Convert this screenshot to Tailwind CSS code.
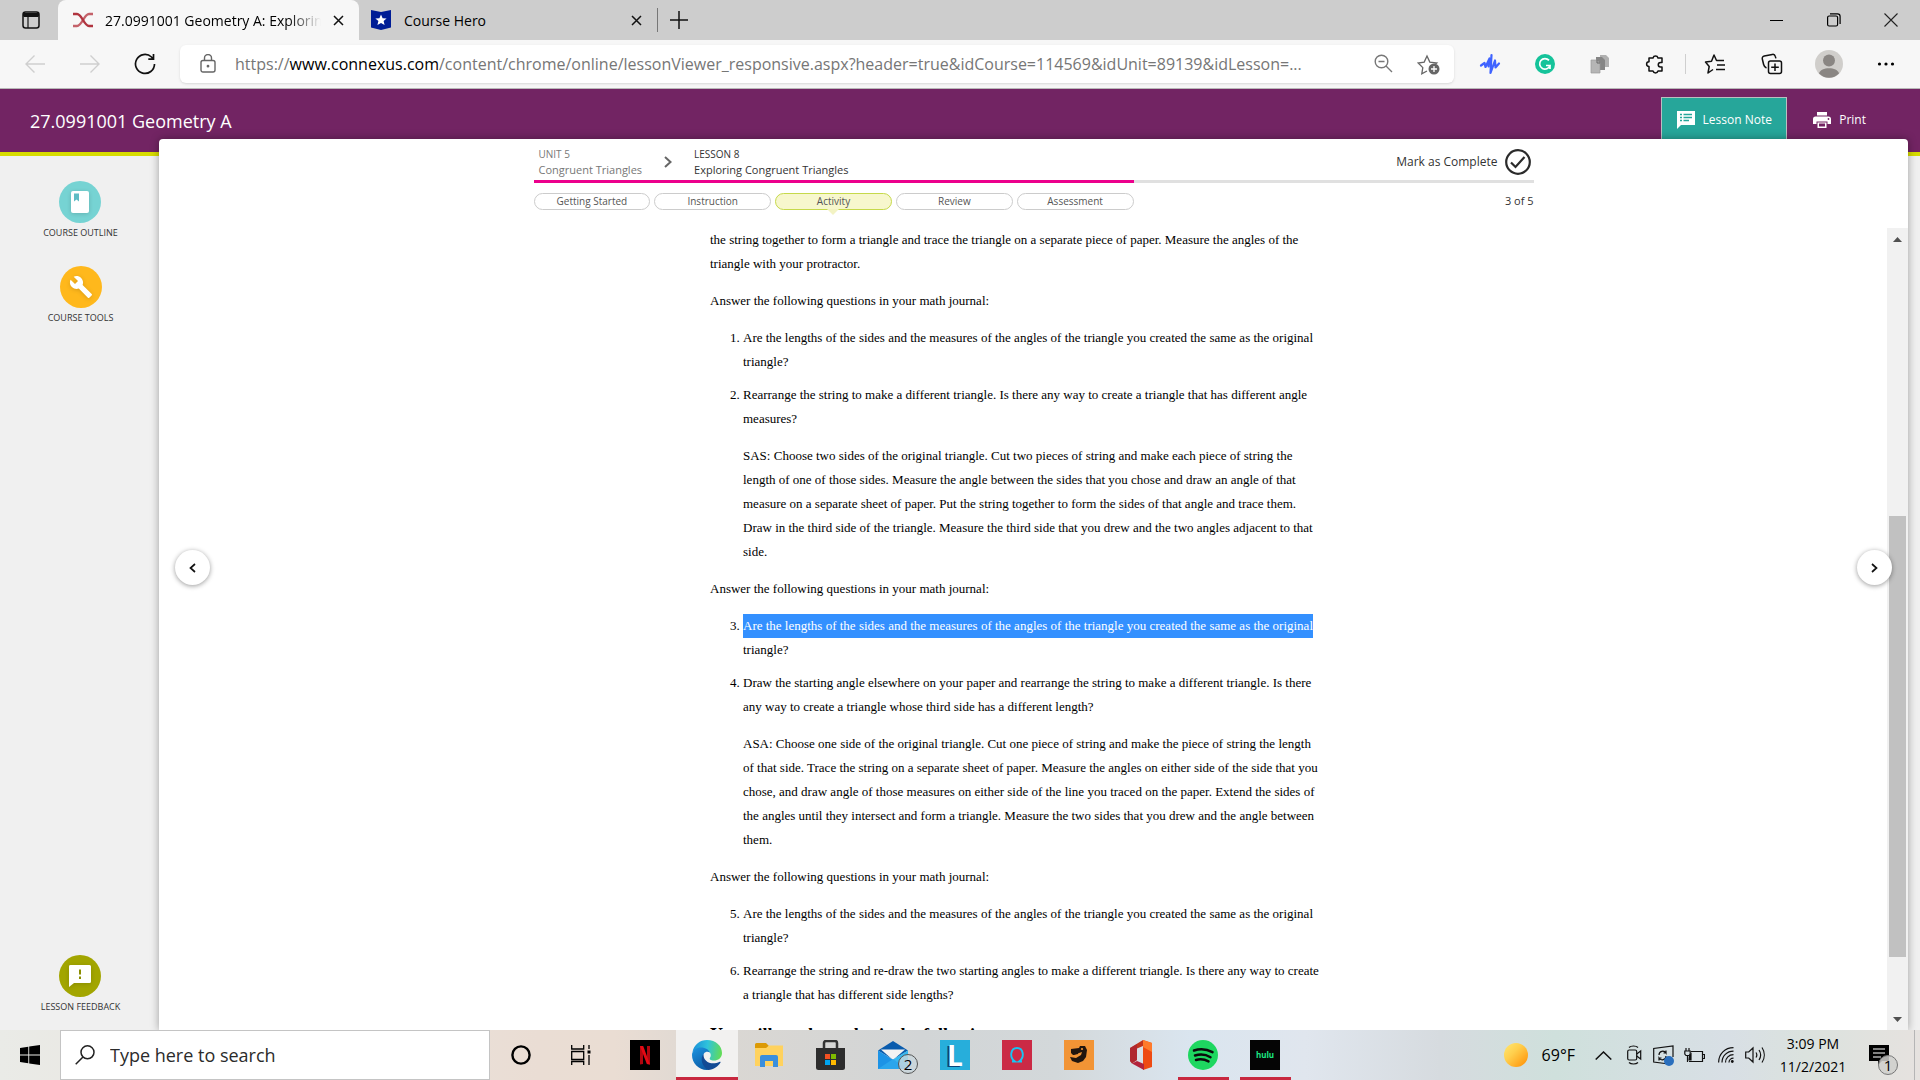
<!DOCTYPE html>
<html lang="en">
<head>
    <meta charset="UTF-8">
    <meta name="viewport" content="width=device-width, initial-scale=1.0">
    <title>27.0991001 Geometry A: Exploring Congruent Triangles</title>
    <script src="https://cdn.jsdelivr.net/npm/@tailwindcss/browser@4"></script>
</head>
<body class="flex flex-col h-screen overflow-hidden bg-[#f0f0f0] text-black font-['Open_Sans','Noto_Sans',sans-serif]">

    <!-- Tab strip -->
    <div class="flex h-10 shrink-0 items-center bg-[#cdcdcd]">
        <button aria-label="Tab actions" class="flex w-[58px] justify-center pl-1">
            <svg class="size-5" viewBox="0 0 20 20" fill="none" stroke="#111" stroke-width="1.5"><rect x="2" y="2" width="16" height="16" rx="2.5"/><path d="M2 4.5h16M2.5 5.5h15" stroke-width="3"/><path d="M7 6v12" stroke-width="1.2"/></svg>
        </button>
        <div class="flex h-full w-[301px] items-center rounded-t-lg bg-[#f7f7f7] pl-[15px] pr-3">
            <svg class="h-4 w-5 shrink-0" viewBox="0 0 20 16" fill="none" stroke-width="2.4"><path d="M20 2h-4c-5 0-7 12-12 12H0" stroke="#c4626a"/><path d="M0 2h4c5 0 7 12 12 12h4" stroke="#b0343f"/></svg>
            <span class="ml-3 w-[216px] overflow-hidden whitespace-nowrap text-[14px] mask-r-from-85%">27.0991001 Geometry A: Explorin</span>
            <button aria-label="Close tab" class="ml-3"><svg class="size-[11px]" viewBox="0 0 11 11" stroke="#111" stroke-width="1.5"><path d="M1 1l9 9M10 1l-9 9"/></svg></button>
        </div>
        <div class="flex h-full w-[298px] items-center pl-3 pr-[15px]">
            <svg class="h-5 w-5" viewBox="0 0 20 20"><path d="M0 0l10 2L20 0v17.500L10 20 0 17.500z" fill="#001d96"/><path d="M10 4.500l1.600 3.700 4 .3-3 2.600 1 4L10 13l-3.600 2.100 1-4-3-2.600 4-.3z" fill="#fff"/></svg>
            <span class="ml-[13px] text-[14px]">Course Hero</span>
            <button aria-label="Close tab" class="ml-auto"><svg class="size-[11px]" viewBox="0 0 11 11" stroke="#111" stroke-width="1.500"><path d="M1 1l9 9M10 1l-9 9"/></svg></button>
        </div>
        <div class="h-6 w-px bg-[#777]"></div>
        <button aria-label="New tab" class="ml-3"><svg class="size-[18px]" viewBox="0 0 18 18" stroke="#111" stroke-width="1.500"><path d="M9 0v18M0 9h18"/></svg></button>
        <div class="ml-auto flex w-[150px] items-center justify-between pr-[22px]">
            <button aria-label="Minimize"><svg class="size-[13px]" viewBox="0 0 13 13" stroke="#000"><path d="M0 6.500h13"/></svg></button>
            <button aria-label="Restore"><svg class="size-[14px]" viewBox="0 0 14 14" fill="none" stroke="#000" stroke-width="1.200"><rect x=".6" y="3" width="10" height="10" rx="1.500"/><path d="M3 .8h7.500a2.600 2.600 0 0 1 2.600 2.600V11"/></svg></button>
            <button aria-label="Close window"><svg class="size-[14px]" viewBox="0 0 14 14" stroke="#222" stroke-width="1.100"><path d="M.5.5l13 13M13.500.5l-13 13"/></svg></button>
        </div>
    </div>

    <!-- Address bar -->
    <div class="flex h-[49px] shrink-0 items-center border-b border-[#b8b8b8] bg-[#f7f7f7] pb-px">
        <div class="flex w-[180px] shrink-0 items-center justify-between pl-6 pr-6">
            <button aria-label="Back"><svg class="size-[22px]" viewBox="0 0 22 22" fill="none" stroke="#cfcfcf" stroke-width="1.400"><path d="M21 11H2M10.500 2.500L2 11l8.500 8.500"/></svg></button>
            <button aria-label="Forward"><svg class="size-[22px]" viewBox="0 0 22 22" fill="none" stroke="#cfcfcf" stroke-width="1.400"><path d="M1 11h19M11.500 2.500L20 11l-8.500 8.500"/></svg></button>
            <button aria-label="Refresh"><svg class="size-[22px]" viewBox="0 0 22 22" fill="none" stroke="#111" stroke-width="1.700"><path d="M20.500 11a9.500 9.500 0 1 1-3-7l1.700 1.800M19.500 1v5.200h-5.200"/></svg></button>
        </div>
        <div class="flex h-[38px] min-w-0 flex-1 items-center rounded-md bg-white pl-5 pr-[14px] shadow-sm">
            <svg class="h-[19px] w-4 shrink-0" viewBox="0 0 16 19" fill="none" stroke="#666" stroke-width="1.400"><rect x="1" y="6.500" width="14" height="11.500" rx="2"/><path d="M4.500 6.500V4a3.500 3.500 0 0 1 7 0v2.500"/><circle cx="8" cy="12.200" r=".7" fill="#666"/></svg>
            <div class="ml-[19px] min-w-0 flex-1 truncate text-[16px] text-[#767676]">https://<span class="text-black">www.connexus.com</span>/content/chrome/online/lessonViewer_responsive.aspx?header=true&amp;idCourse=114569&amp;idUnit=89139&amp;idLesson=...</div>
            <button aria-label="Zoom" class="ml-7"><svg class="size-[19px]" viewBox="0 0 19 19" fill="none" stroke="#777" stroke-width="1.400"><circle cx="7.500" cy="7.500" r="6.300"/><path d="M12 12l6 6M4.500 7.500h6"/></svg></button>
            <button aria-label="Add to favorites" class="ml-6"><svg class="h-[22px] w-[23px]" viewBox="0 0 23 22" fill="none" stroke="#666" stroke-width="1.300"><path d="M10 18l-5.200 2.800 1-6.200L1.200 10l6-.9L10 3l2.800 6.100 7 .9-1.800 1.600"/><circle cx="17" cy="16" r="5.500" fill="#666" stroke="none"/><path d="M17 13v6M14 16h6" stroke="#fff"/></svg></button>
        </div>
        <div class="flex shrink-0 items-center pl-2 pr-1.5">
            <div class="grid w-[220px] grid-cols-4 place-items-center">
                <button aria-label="Speechify"><svg class="size-[22px]" viewBox="0 0 22 22" fill="none" stroke="#3f63ff" stroke-width="2.200" stroke-linecap="round" stroke-linejoin="round"><path d="M2 12.500l3.500-2.500 1 4L10.500 5.500l-1 8M12.500 2l-1 18L16 7.500l.5 7 3.500-4"/></svg></button>
                <button aria-label="Grammarly"><svg class="size-5" viewBox="0 0 20 20"><circle cx="10" cy="10" r="10" fill="#15c39a"/><path d="M14 6.400A5.300 5.300 0 1 0 15 11.500h-4M15 11v4" fill="none" stroke="#fff" stroke-width="1.700"/></svg></button>
                <button aria-label="Copy pages"><svg class="size-5" viewBox="0 0 20 20"><path d="M10 1h6l3 3v9h-9z" fill="#b0b0b0"/><path d="M6 3h6l3 3v10H6z" fill="#858585"/><path d="M1 6h6l3 3v10H1z" fill="#b5b5b5" stroke="#999" stroke-width=".7"/><path d="M7 6v3h3" fill="none" stroke="#666"/></svg></button>
                <button aria-label="Extensions"><svg class="size-5" viewBox="0 0 20 20" fill="none" stroke="#111" stroke-width="1.500" stroke-linejoin="round"><path d="M4 4h4a2.600 2.600 0 0 1 5 0h4v4.500h-1.500a2 2 0 0 0 0 4.500H17v4h-4a2.600 2.600 0 0 1-5 0H4v-4.500a2.400 2.400 0 0 1 0-4.800z"/></svg></button>
            </div>
            <div class="ml-[3px] h-5 w-px bg-[#cfcfcf]"></div>
            <div class="grid w-[228px] grid-cols-4 place-items-center">
                <button aria-label="Favorites"><svg class="size-[22px]" viewBox="0 0 22 22" fill="none" stroke="#111" stroke-width="1.500" stroke-linejoin="round"><path d="M9 16.500L4 20l1.200-6.500L1.500 9l6-.8L10 2l2.500 5.500H20M13 12h8M12 16.500h9"/></svg></button>
                <button aria-label="Collections"><svg class="size-[22px]" viewBox="0 0 22 22" fill="none" stroke="#111" stroke-width="1.500"><rect x="7.500" y="8" width="13" height="12.500" rx="2"/><path d="M14 10.500v7.500M10.200 14.200h7.600M5.500 15C3 14 3 13 2.500 11L1.300 6c-.4-1.500.5-2.600 2-2.900l8-1.700c1.500-.3 2.600.5 3 2l.6 2"/></svg></button>
                <button aria-label="Profile"><svg class="size-7" viewBox="0 0 28 28"><circle cx="14" cy="14" r="14" fill="#d0cecb"/><circle cx="14" cy="10.500" r="6" fill="#8a8683"/><path d="M4 23.500c1.500-7 18.500-7 20 0a14 14 0 0 1-20 0z" fill="#8a8683"/></svg></button>
                <button aria-label="Settings and more"><svg class="h-5 w-[18px]" viewBox="0 0 18 20"><circle cx="2.500" cy="10" r="1.600"/><circle cx="9" cy="10" r="1.600"/><circle cx="15.500" cy="10" r="1.600"/></svg></button>
            </div>
        </div>
    </div>

    <!-- Course header -->
    <header class="flex h-[67px] shrink-0 items-start justify-between border-b-4 border-[#d7dc00] bg-[#722463] pl-[30px] pr-[54px] text-white">
        <h1 class="pt-5 text-[18px] leading-6">27.0991001 Geometry A</h1>
        <div class="flex pt-2 text-[12px]">
            <button class="flex h-[46px] w-[126px] items-center justify-center gap-2 border border-[#b9bfc0] bg-[#26a69a]">
                <svg class="size-[18px]" viewBox="0 0 18 18"><path d="M0 0h18v14H4l-4 4z" fill="#fff"/><path d="M3 3.500h2M3 6.500h2M3 9.500h2M6.500 3.500H15M6.500 6.500H15M6.500 9.500H12" stroke="#26a69a" stroke-width="1.600"/></svg>
                Lesson Note
            </button>
            <button class="ml-[26px] flex h-[46px] items-center gap-2">
                <svg class="size-[18px]" viewBox="0 0 18 18" fill="#fff"><path d="M4 1h10v3.500H4zM2.500 5.500h13A2.500 2.500 0 0 1 18 8v5h-3.500v-2.500h-11V13H0V8a2.500 2.500 0 0 1 2.500-2.500z"/><path d="M4.500 11.500h9V17h-9z"/><path d="M6 12.500h6v3H6z" fill="#722463"/><circle cx="15.500" cy="8" r=".9" fill="#722463"/></svg>
                Print
            </button>
        </div>
    </header>

    <div class="flex min-h-0 flex-1">
        <!-- Sidebar -->
        <nav class="flex w-[159px] shrink-0 flex-col items-center pt-[25px] pb-[15px] pl-0.5 text-[9px] leading-4 text-[#333]">
            <a href="#" class="flex flex-col items-center">
                <span class="flex size-[42px] items-center justify-center rounded-full bg-[#76d3d3]"><svg class="h-[22px] w-[18px] drop-shadow-sm" viewBox="0 0 18 22"><rect width="18" height="22" rx="2" fill="#fff"/><path d="M3 2.500h5v8L5.500 8.500 3 10.500z" fill="#5fbcc4"/></svg></span>
                <span class="mt-0.5">COURSE OUTLINE</span>
            </a>
            <a href="#" class="mt-[25px] flex flex-col items-center">
                <span class="flex size-[42px] items-center justify-center rounded-full bg-[#ffb81c]"><svg class="size-6 drop-shadow-sm" viewBox="0 0 24 24" fill="#fff"><path d="M22.700 19l-9.100-9.100c.9-2.300.4-5-1.500-6.900-2-2-5-2.400-7.400-1.300L9 6 6 9 1.600 4.700C.4 7.100.9 10.100 2.900 12.100c1.900 1.900 4.600 2.400 6.900 1.500l9.100 9.100c.4.4 1 .4 1.400 0l2.300-2.300c.5-.4.5-1.100.1-1.400z"/></svg></span>
                <span class="mt-0.5">COURSE TOOLS</span>
            </a>
            <a href="#" class="mt-auto flex flex-col items-center">
                <span class="flex size-[42px] items-center justify-center rounded-full bg-[#a2a500]"><svg class="size-[22px] drop-shadow-sm" viewBox="0 0 22 22"><path d="M1.500 0h19A1.500 1.500 0 0 1 22 1.500v15a1.500 1.500 0 0 1-1.500 1.500H5l-5 4V1.500A1.500 1.500 0 0 1 1.500 0z" fill="#fff"/><path d="M11 4.500v5M11 11.500v2.500" stroke="#8a8d00" stroke-width="2"/></svg></span>
                <span class="mt-0.5">LESSON FEEDBACK</span>
            </a>
        </nav>

        <!-- Lesson panel -->
        <main class="relative -mt-[17px] mr-3 flex min-w-0 flex-1 flex-col rounded-t bg-white shadow-[0_0_8px_rgba(0,0,0,0.35)]">
            <div class="mx-auto h-[89px] w-[1000px] max-w-full shrink-0 text-[#333]">
                <div class="flex h-[41px] items-center pt-1 pl-[5px]">
                    <a href="#" class="text-[11px] leading-[15px] text-[#777]"><span class="block text-[10px]">UNIT 5</span>Congruent Triangles</a>
                    <svg class="mx-[22px] h-3 w-2" viewBox="0 0 8 12" fill="none" stroke="#666" stroke-width="2"><path d="M1 1l5.500 5L1 11"/></svg>
                    <div class="text-[11px] leading-[15px]"><span class="block text-[10px]">LESSON 8</span>Exploring Congruent Triangles</div>
                    <button class="ml-auto flex items-center gap-[7px] pr-[3px] text-[12px]">Mark as Complete
                        <svg class="size-[26px]" viewBox="0 0 26 26" fill="none" stroke="#2b2b2b" stroke-width="2.200"><circle cx="13" cy="13" r="11.800"/><path d="M6 13.500l4.500 4.500L19.500 8"/></svg>
                    </button>
                </div>
                <div class="h-[3px] w-full bg-[#e0e0e0]"><div class="h-full w-3/5 bg-[#ec008c]"></div></div>
                <div class="flex items-start justify-between pt-[10px]">
                    <div class="grid w-3/5 grid-cols-5 gap-1 text-center text-[10px] leading-[15px] text-[#555]">
                        <button class="rounded-full border border-[#ccc]">Getting Started</button>
                        <button class="rounded-full border border-[#ccc]">Instruction</button>
                        <button class="relative rounded-full border border-[#c6d94a] bg-[#f7f7cd]">Activity<span class="absolute top-full left-1/2 -ml-[6px] border-x-6 border-t-6 border-x-transparent border-t-[#f3f3c4]"></span></button>
                        <button class="rounded-full border border-[#ccc]">Review</button>
                        <button class="rounded-full border border-[#ccc]">Assessment</button>
                    </div>
                    <span class="text-[11px] leading-[15px]">3 of 5</span>
                </div>
            </div>

            <div class="flex min-h-0 flex-1">
                <article class="min-w-0 flex-1 overflow-hidden">
                    <div class="ml-[551px] w-[640px] text-[13px] leading-6 font-['Liberation_Serif',serif]">
                        <p>the string together to form a triangle and trace the triangle on a separate piece of paper. Measure the angles of the<br>triangle with your protractor.</p>
                        <p class="mt-[13px]">Answer the following questions in your math journal:</p>
                        <ol start="1" class="mt-[13px] list-decimal space-y-[9px] pl-[33px]">
                            <li>Are the lengths of the sides and the measures of the angles of the triangle you created the same as the original<br>triangle?</li>
                            <li>Rearrange the string to make a different triangle. Is there any way to create a triangle that has different angle<br>measures?
                                <p class="mt-[13px]">SAS: Choose two sides of the original triangle. Cut two pieces of string and make each piece of string the<br>length of one of those sides. Measure the angle between the sides that you chose and draw an angle of that<br>measure on a separate sheet of paper. Put the string together to form the sides of that angle and trace them.<br>Draw in the third side of the triangle. Measure the third side that you drew and the two angles adjacent to that<br>side.</p>
                            </li>
                        </ol>
                        <p class="mt-[13px]">Answer the following questions in your math journal:</p>
                        <ol start="3" class="mt-[13px] list-decimal space-y-[9px] pl-[33px]">
                            <li><mark class="inline-block bg-[#3390ff] text-white">Are the lengths of the sides and the measures of the angles of the triangle you created the same as the original</mark><br>triangle?</li>
                            <li>Draw the starting angle elsewhere on your paper and rearrange the string to make a different triangle. Is there<br>any way to create a triangle whose third side has a different length?
                                <p class="mt-[13px]">ASA: Choose one side of the original triangle. Cut one piece of string and make the piece of string the length<br>of that side. Trace the string on a separate sheet of paper. Measure the angles on either side of the side that you<br>chose, and draw angle of those measures on either side of the line you traced on the paper. Extend the sides of<br>the angles until they intersect and form a triangle. Measure the two sides that you drew and the angle between<br>them.</p>
                            </li>
                        </ol>
                        <p class="mt-[13px]">Answer the following questions in your math journal:</p>
                        <ol start="5" class="mt-[13px] list-decimal space-y-[9px] pl-[33px]">
                            <li>Are the lengths of the sides and the measures of the angles of the triangle you created the same as the original<br>triangle?</li>
                            <li>Rearrange the string and re-draw the two starting angles to make a different triangle. Is there any way to create<br>a triangle that has different side lengths?</li>
                        </ol>
                        <h2 class="mt-4 text-[18px] font-bold">You will need to submit the following:</h2>
                    </div>
                </article>
                <!-- Scrollbar -->
                <div class="flex w-[21px] shrink-0 flex-col items-center bg-[#f1f1f1] pt-[9px] pb-2">
                    <svg class="h-[5px] w-[9px]" viewBox="0 0 9 5" fill="#505050"><path d="M0 5l4.500-5L9 5z"/></svg>
                    <div class="mt-[274px] h-[441px] w-[17px] bg-[#c1c1c1]"></div>
                    <svg class="mt-auto h-[5px] w-[9px]" viewBox="0 0 9 5" fill="#505050"><path d="M0 0h9L4.500 5z"/></svg>
                </div>
            </div>

            <button aria-label="Previous page" class="absolute top-[411px] left-4 flex size-[35px] items-center justify-center rounded-full bg-white shadow-[0_1px_5px_rgba(0,0,0,0.4)]"><svg class="h-[10px] w-[7px]" viewBox="0 0 7 10" fill="none" stroke="#111" stroke-width="1.700"><path d="M6 1L1.500 5 6 9"/></svg></button>
            <button aria-label="Next page" class="absolute top-[411px] right-4 flex size-[35px] items-center justify-center rounded-full bg-white shadow-[0_1px_5px_rgba(0,0,0,0.4)]"><svg class="h-[10px] w-[7px]" viewBox="0 0 7 10" fill="none" stroke="#111" stroke-width="1.700"><path d="M1 1l4.500 4L1 9"/></svg></button>
        </main>
    </div>

    <!-- Taskbar -->
    <footer class="relative z-10 flex h-[50px] shrink-0 items-center bg-[linear-gradient(90deg,#eaebe7_0%,#eaddd4_28%,#eaddd3_32%,#dad7d3_38%,#d2d5d6_48%,#d3d8da_55%,#dae5ef_62%,#e0e6ee_68%,#d6dbdf_75%,#cfe0dc_81%,#d8dfe5_90%,#dbe2de_94%,#e6e2df_100%)]">
        <button aria-label="Start" class="flex w-[60px] shrink-0 justify-center"><svg class="size-5" viewBox="0 0 20 20"><path d="M0 3l8.300-1.200v7.700H0zM9.200 1.600L20 0v9.500H9.200zM0 10.400h8.300v7.800L0 17zM9.200 10.400H20V20L9.200 18.400z"/></svg></button>
        <label class="flex h-full w-[430px] shrink-0 items-center border border-[#c4c4c4] bg-white pl-[14px]">
            <svg class="size-5 shrink-0" viewBox="0 0 20 20" fill="none" stroke="#222" stroke-width="1.500"><circle cx="12.500" cy="7.300" r="6.500"/><path d="M8 12L.7 19.300"/></svg>
            <input type="text" aria-label="Search" placeholder="Type here to search" class="ml-[15px] w-80 text-[18px] outline-none placeholder:text-[#2b2b2b]">
        </label>
        <button aria-label="Cortana" class="flex w-[62px] justify-center"><svg class="size-5" viewBox="0 0 20 20" fill="none" stroke="#000" stroke-width="2.400"><circle cx="10" cy="10" r="8.600"/></svg></button>
        <button aria-label="Task view" class="flex w-[62px] justify-center pr-1"><svg class="size-5" viewBox="0 0 20 20" fill="none" stroke="#000" stroke-width="1.300"><path d="M.7 0v4h12V0M.7 6.500h12v8H.7zM.7 20v-3.500h12V20M18 0v4M18 10v10"/><path d="M16.500 5.500h3v3h-3z" fill="#000" stroke="none"/></svg></button>
        <button aria-label="Netflix" class="flex w-[62px] justify-center"><svg class="size-[30px]" viewBox="0 0 30 30"><path d="M0 0h30v30H0z"/><path d="M10 6h3v18l-3 .5zM17 6h3v18.500l-3-.5z" fill="#b1060f"/><path d="M10 6h3.200L20 24.500l-3.200-.5z" fill="#e50914"/></svg></button>
        <button aria-label="Edge" class="flex h-full w-[62px] items-center justify-center border-b-3 border-[#c8283f] bg-[#f2f1f0] pt-[3px]">
            <svg class="size-[30px]" viewBox="0 0 30 30">
                <defs>
                    <linearGradient id="edgeTop" x1="0" x2="1" y1=".3" y2=".4"><stop stop-color="#1b8fd8"/><stop offset=".5" stop-color="#2fc3dc"/><stop offset="1" stop-color="#62dc57"/></linearGradient>
                    <linearGradient id="edgeLow" x1="0" x2=".6" y1="0" y2="1"><stop stop-color="#1c94e0"/><stop offset="1" stop-color="#0c59a4"/></linearGradient>
                </defs>
                <path d="M.5 12C2 4.500 8 0 15 0c9 0 15 6 15 13 0 5-4 7.500-8 7.500-3.500 0-5-1.300-4-2.700 2.300-3.300-.5-7.300-4.500-8.300C8.500 8.300 2.500 9.500.5 12z" fill="url(#edgeTop)"/>
                <path d="M0 15c0-5 5-7.500 9-7.500 4.500 0 8 2.500 9 5-4-2-7 .5-7 4.500 0 6 6 10 11 9.500A14.800 14.800 0 0 1 15 30C6.500 30 0 23 0 15z" fill="url(#edgeLow)"/>
                <path d="M11.500 14C8 18 9.500 26 16 29.900c6-.4 10-3.400 12.500-7.400.3-.6-.2-1-.8-.7-8 3.800-16.700.2-16.200-7.800z" fill="#134a94"/>
            </svg>
        </button>
        <button aria-label="File Explorer" class="flex w-[62px] justify-center"><svg class="h-6 w-[28px]" viewBox="0 0 28 24"><path d="M0 1.500A1.500 1.500 0 0 1 1.500 0H11l3 3-2 3H0z" fill="#dc9a06"/><path d="M0 5h11l3-2.500h14V23H0z" fill="#ffd25e"/><path d="M5 24V14a2 2 0 0 1 2-2h14a2 2 0 0 1 2 2v10h-5v-6h-8v6z" fill="#3a8fdd"/></svg></button>
        <button aria-label="Microsoft Store" class="flex w-[62px] justify-center"><svg class="size-[30px]" viewBox="0 0 30 30"><path d="M8 9V3a2 2 0 0 1 2-2h9a2 2 0 0 1 2 2v6" fill="none" stroke="#333" stroke-width="2.500"/><path d="M0 8h29v19.500a2.500 2.500 0 0 1-2.500 2.500h-24A2.500 2.500 0 0 1 0 27.500z" fill="#2d2d2d"/><path d="M9 14h5v5H9z" fill="#f25022"/><path d="M15 14h5v5h-5z" fill="#7fba00"/><path d="M9 20h5v5H9z" fill="#00a4ef"/><path d="M15 20h5v5h-5z" fill="#ffb900"/></svg></button>
        <button aria-label="Mail" class="relative flex w-[62px] justify-center"><svg class="size-[30px]" viewBox="0 0 30 30"><path d="M0 10.500L15 1l15 9.500-15 9z" fill="#0a5cad"/><path d="M3 9.500h24L15 20z" fill="#f3f3f3"/><path d="M0 10.500L30 29H0z" fill="#1c93e6"/><path d="M30 10.500V29L15 19.500z" fill="#35b8f1"/><path d="M0 29l15-10 15 10z" fill="#2aa5ec"/></svg>
            <span class="absolute top-[14px] left-[36px] flex size-5 items-center justify-center rounded-full border border-[#555] bg-[#c9d6dc]/80 text-[15px]">2</span></button>
        <button aria-label="Lexia" class="flex w-[62px] justify-center"><span class="flex size-[30px] items-center justify-center bg-[#27aedb] text-[28px] leading-none font-bold text-white [text-shadow:-2px_1px_0_#0a4378]">L</span></button>
        <button aria-label="Music" class="flex w-[62px] justify-center"><svg class="size-[30px]" viewBox="0 0 30 30"><path d="M0 0h30v30H0z" fill="#cb2a45"/><path d="M10 21.500h3c-6-4-4.500-13.500 2-13.500s8 9.500 2 13.500h3" fill="none" stroke="#16c5f3" stroke-width="1.900"/></svg></button>
        <button aria-label="Game" class="flex w-[62px] justify-center"><svg class="size-[30px]" viewBox="0 0 30 30"><path d="M0 0h30v30H0z" fill="#f29435"/><path d="M7 9l8-1 1-2h5l2 4-1 7-3 4-5 2-6-2-2-4 6 1 5-3 1-3-9 3-2-2z" fill="#21160f"/><path d="M9 14l5-1M18 9l1 3" stroke="#21160f" stroke-width="1.800"/><circle cx="18" cy="9" r="1.100" fill="#f29435"/></svg></button>
        <button aria-label="Office" class="flex w-[62px] justify-center"><svg class="h-[30px] w-6" viewBox="0 0 24 30"><path d="M1 8L14 0v6L8 8.500V20l-5 3.500L1 21z" fill="#c2341d"/><path d="M14 0l9 3v24l-9 3V0z" fill="#ee4a12"/><path d="M14 0l9 3v9l-9-5z" fill="#ff7a2b"/><path d="M3 23.500L8 21l7 3v6z" fill="#b3233b"/><path d="M1 8l7-4v16l-5 3.500L1 21z" fill="#a31f3c" opacity=".6"/></svg></button>
        <button aria-label="Spotify" class="relative flex h-full w-[62px] items-center justify-center"><svg class="size-[30px]" viewBox="0 0 30 30"><circle cx="15" cy="15" r="15" fill="#1ed760"/><path d="M6 10.500c6-2 13-1.300 18.500 1.700M7 15.500c5-1.500 11-1 15.500 1.700M8 20c4-1.200 8.500-.8 12.500 1.400" fill="none" stroke="#0b0b0b" stroke-width="2.500" stroke-linecap="round"/></svg><span class="absolute bottom-0 h-[3px] w-[51px] bg-[#c8283f]"></span></button>
        <button aria-label="Hulu" class="relative flex h-full w-[62px] items-center justify-center"><span class="flex size-[30px] items-center justify-center bg-[#050505] text-[8px] font-bold text-[#1ce783]">hulu</span><span class="absolute bottom-0 h-[3px] w-[51px] bg-[#c8283f]"></span></button>

        <!-- System tray -->
        <div class="ml-auto flex h-full items-center">
            <button class="flex items-center gap-[14px] text-[16px]"><svg class="size-6" viewBox="0 0 24 24"><defs><linearGradient id="sun" x1="0" y1="0" x2="1" y2="1"><stop stop-color="#ffe873"/><stop offset=".4" stop-color="#ffcf4d"/><stop offset="1" stop-color="#ff8c00"/></linearGradient></defs><circle cx="12" cy="12" r="12" fill="url(#sun)"/></svg>69°F</button>
            <button aria-label="Show hidden icons" class="ml-5"><svg class="h-[9px] w-[17px]" viewBox="0 0 17 9" fill="none" stroke="#111" stroke-width="1.500"><path d="M.7 8.500l7.800-7.500 7.800 7.500"/></svg></button>
            <svg class="ml-[15px] h-5 w-[15px]" viewBox="0 0 15 20" fill="none" stroke="#111" stroke-width="1.200"><rect x=".7" y="5" width="9" height="10" rx="1.500"/><path d="M9.700 9l4-3v8l-4-3M2 2.500c2-2 7-2 9 0M2 17.500c2 2 7 2 9 0"/></svg>
            <svg class="ml-[11px] size-[21px]" viewBox="0 0 21 21" fill="none" stroke="#111" stroke-width="1.200"><path d="M12 18.500L.7 17V3.500L20 1v11M6 10c0-4 5-5 7-2V5.500M13 8h-2.500M13 11c0 4-5 5-7 2v2.500M6 13h2.500"/><circle cx="16" cy="16" r="5" fill="#2a6fbd" stroke="none"/></svg>
            <svg class="ml-[10px] h-[15px] w-[21px]" viewBox="0 0 21 15" fill="none" stroke="#111" stroke-width="1.200"><path d="M7 3.500h11.500v10H5M19 6.500h1.500v4H19M2 0v3M5 0v3M.8 3h5.400v3L5 7.500H2L.8 6zM3.500 7.500V14"/><path d="M5.500 8L7 6v6H5z" fill="#111"/></svg>
            <svg class="ml-[13px] size-4" viewBox="0 0 16 16" fill="none" stroke="#111" stroke-width="1.200"><path d="M.6 15.500C.6 7 7 .7 15.500.7M4 15.500C4 9 9 4.200 15.500 4.200M7.500 15.500c0-4.500 3.500-7.800 8-7.800M11 15.500c0-2.500 2-4.300 4.500-4.300"/><circle cx="14.300" cy="14.500" r="1.400" fill="#111" stroke="none"/></svg>
            <svg class="ml-[11px] h-[18px] w-[21px]" viewBox="0 0 21 18" fill="none" stroke="#111" stroke-width="1.200"><path d="M.7 6h3L8 2v14l-4.300-4h-3zM11 6.500c1 1.500 1 3.500 0 5M14 4c2 3 2 7 0 10M17 1.500c3 4.500 3 10.500 0 15"/></svg>
            <button class="ml-[11px] w-[72px] text-center text-[14px] leading-[23px]">3:09 PM<br>11/2/2021</button>
            <button aria-label="Notifications" class="relative ml-5 mr-[25px]"><svg class="size-5" viewBox="0 0 20 20"><path d="M0 0h20v16h-7l-4 4v-4H0z"/><path d="M4 4h12M4 8h12M4 12h8" stroke="#fff" stroke-width="1.200"/></svg><span class="absolute top-[10px] left-[9px] flex size-5 items-center justify-center rounded-full border border-[#777] bg-[#cfcfcd]/85 text-[15px]">1</span></button>
            <div class="mr-[5px] h-full w-px bg-[#b5b5b5]"></div>
        </div>
    </footer>
</body>
</html>
